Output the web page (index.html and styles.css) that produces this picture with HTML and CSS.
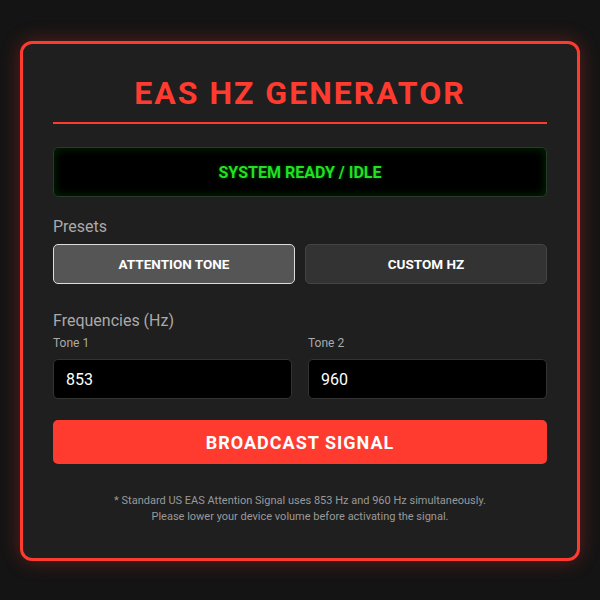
FILE: index.html
```html
<!DOCTYPE html>
<html>
<head>
<meta charset="utf-8">
<link rel="stylesheet" href="styles.css">
</head>
<body>
<div class="card">
  <h1 class="title">EAS HZ GENERATOR</h1>
  <div class="status">SYSTEM READY / IDLE</div>
  <div class="label presets-label">Presets</div>
  <div class="presets">
    <button class="preset active">ATTENTION TONE</button>
    <button class="preset">CUSTOM HZ</button>
  </div>
  <div class="label freq-label">Frequencies (Hz)</div>
  <div class="tones">
    <div class="tone">
      <div class="tone-label">Tone 1</div>
      <div class="input">853</div>
    </div>
    <div class="tone">
      <div class="tone-label">Tone 2</div>
      <div class="input">960</div>
    </div>
  </div>
  <button class="broadcast">BROADCAST SIGNAL</button>
  <p class="note">* Standard US EAS Attention Signal uses 853 Hz and 960 Hz simultaneously.<br>Please lower your device volume before activating the signal.</p>
</div>
</body>
</html>
```
FILE: styles.css
```css
html, body {
  margin: 0;
  padding: 0;
}
body {
  background: #141414;
  font-family: Roboto, "Liberation Sans", sans-serif;
  width: 600px;
  height: 600px;
  display: flex;
  align-items: flex-start;
  justify-content: center;
}
.card {
  box-sizing: border-box;
  width: 560px;
  margin-top: 41px;
  background: #1f1f1f;
  border: 3px solid #ff3b30;
  border-radius: 12px;
  padding: 30px 30px 33px;
  box-shadow: 0 0 20px rgba(255, 59, 48, 0.3);
}
.title {
  margin: 0;
  font-size: 32px;
  line-height: 38px;
  font-weight: 700;
  color: #ff3b30;
  text-align: center;
  letter-spacing: 2px;
  padding-bottom: 10px;
  border-bottom: 2px solid #ff3b30;
}
.status {
  margin-top: 23px;
  height: 50px;
  box-sizing: border-box;
  background: #000;
  border: 1px solid #2a3a2a;
  border-radius: 5px;
  box-shadow: inset 0 0 10px rgba(0, 255, 0, 0.18);
  color: #22e022;
  font-weight: 700;
  font-size: 16px;
  display: flex;
  align-items: center;
  justify-content: center;
  text-shadow: 0 0 4px rgba(0, 255, 0, 0.3);
}
.label {
  color: #aaa;
  font-size: 16px;
  line-height: 19px;
}
.presets-label {
  margin-top: 20px;
  margin-bottom: 8px;
}
.presets {
  display: flex;
  gap: 10px;
}
.preset {
  flex: 1;
  height: 40px;
  box-sizing: border-box;
  background: #333;
  border: 1px solid #444;
  border-radius: 5px;
  color: #fff;
  font-family: Roboto, "Liberation Sans", sans-serif;
  font-weight: 700;
  font-size: 13.5px;
  padding: 0;
}
.preset.active {
  background: #555;
  border-color: #ddd;
}
.freq-label {
  margin-top: 27px;
}
.tones {
  display: flex;
  gap: 16px;
  margin-top: 6px;
}
.tone {
  flex: 1;
}
.tone-label {
  color: #aaa;
  font-size: 12px;
  line-height: 14px;
  margin-bottom: 9px;
}
.input {
  height: 40px;
  box-sizing: border-box;
  background: #000;
  border: 1px solid #333;
  border-radius: 5px;
  color: #fff;
  font-size: 16px;
  padding: 0 12px;
  display: flex;
  align-items: center;
}
.broadcast {
  display: block;
  width: 100%;
  height: 44px;
  margin-top: 21px;
  background: #ff3b30;
  border: none;
  border-radius: 5px;
  color: #fff;
  font-family: Roboto, "Liberation Sans", sans-serif;
  font-weight: 700;
  font-size: 18px;
  letter-spacing: 1px;
  padding: 0;
}
.note {
  margin: 29px 0 0;
  color: #999;
  font-size: 11px;
  line-height: 16px;
  text-align: center;
}
```
